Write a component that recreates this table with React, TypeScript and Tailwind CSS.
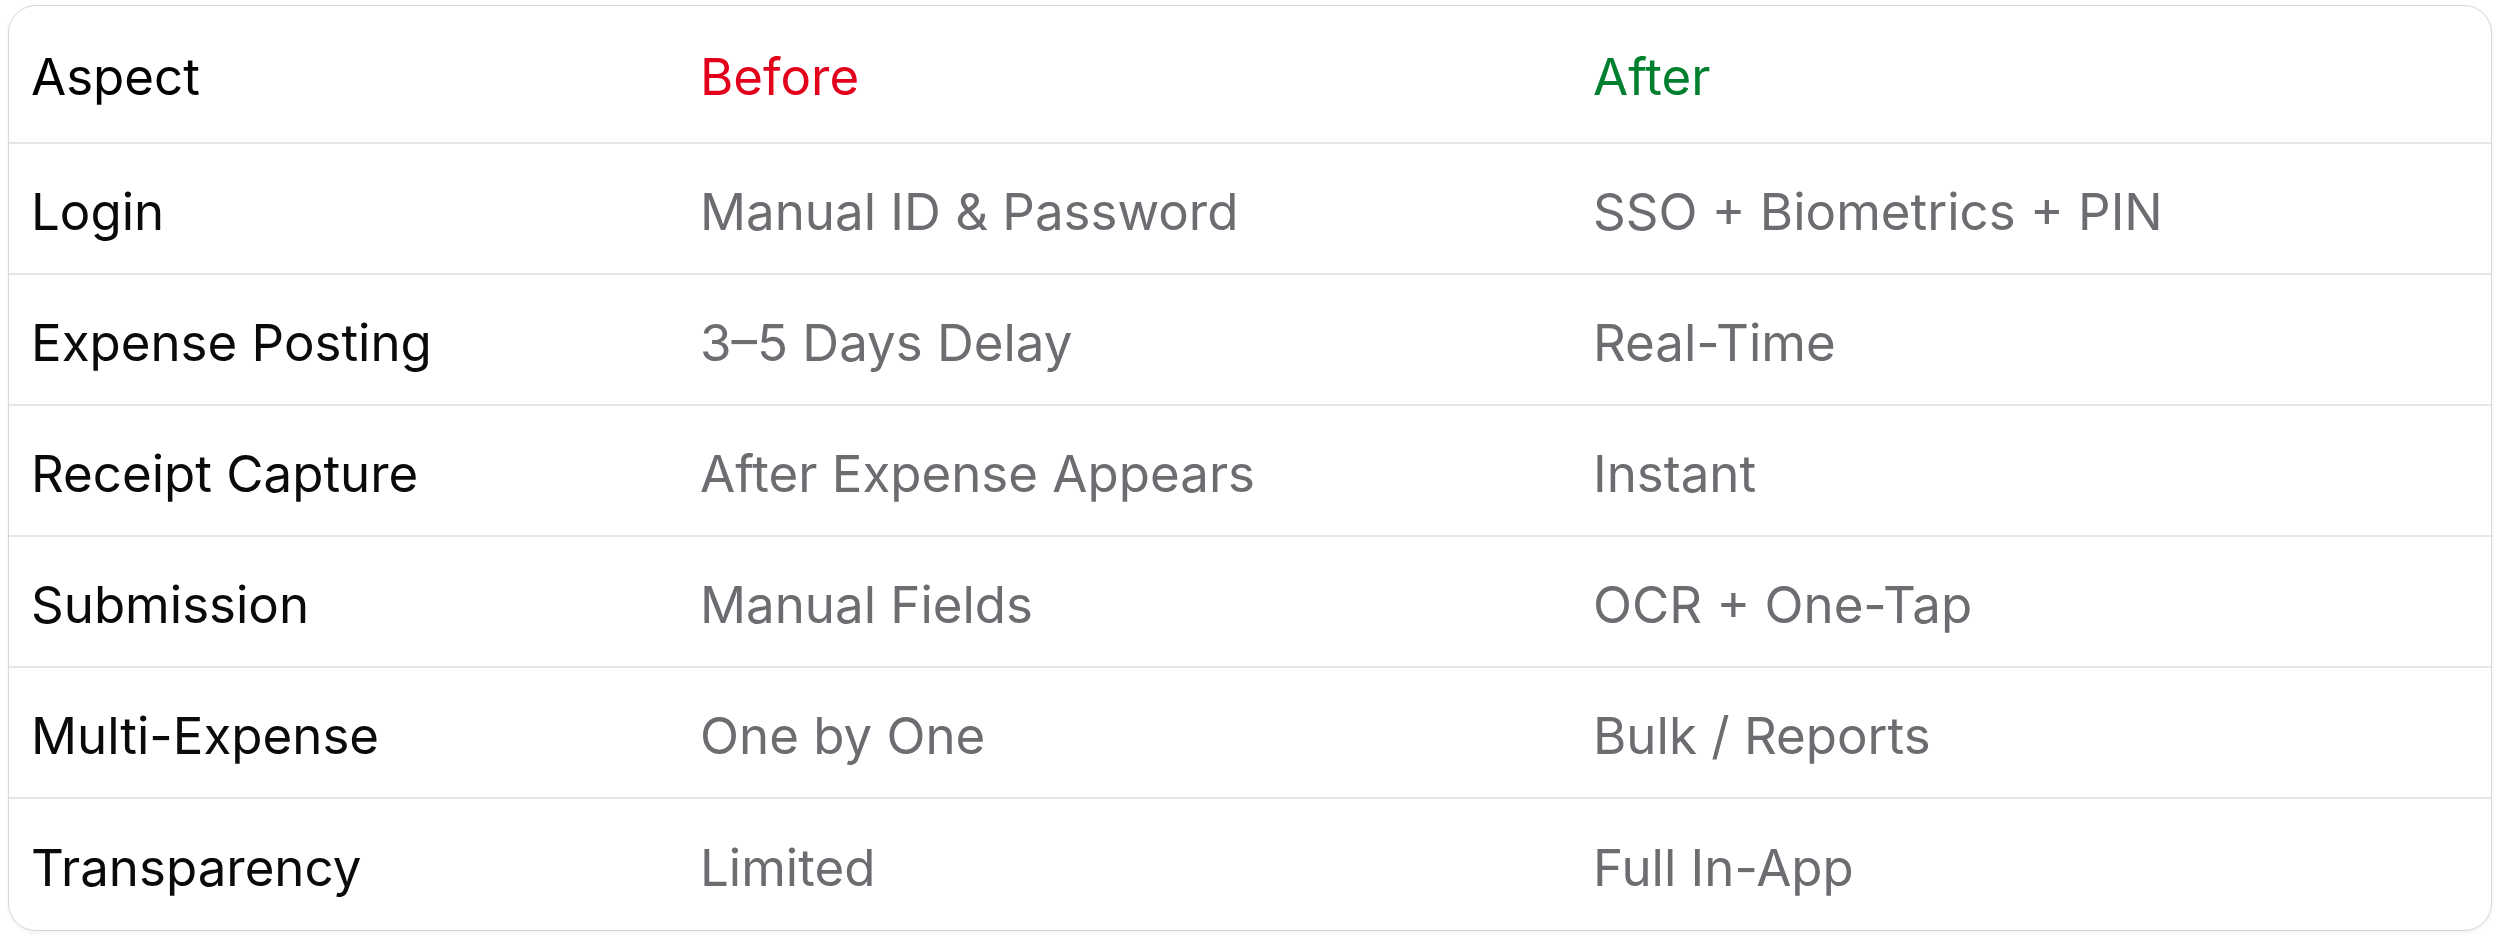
import React from 'react';

const rows = [
  { aspect: 'Login', before: 'Manual ID & Password', after: 'SSO + Biometrics + PIN' },
  { aspect: 'Expense Posting', before: '3–5 Days Delay', after: 'Real-Time' },
  { aspect: 'Receipt Capture', before: 'After Expense Appears', after: 'Instant' },
  { aspect: 'Submission', before: 'Manual Fields', after: 'OCR + One-Tap' },
  { aspect: 'Multi-Expense', before: 'One by One', after: 'Bulk / Reports' },
  { aspect: 'Transparency', before: 'Limited', after: 'Full In-App' },
];

export default function App() {
  return (
    <div className="min-h-screen bg-white px-[8px] pt-[5px] font-['Inter','Liberation_Sans',sans-serif]">
      <div className="overflow-hidden rounded-[28px] border border-[#d6d6dc] bg-white shadow-[0_2px_4px_rgba(0,0,0,0.06)]">
        <div className="grid h-[138px] grid-cols-[668px_893px_1fr] items-center border-b-2 border-[#e6e6e9] pt-[6px] text-[51px]">
          <div className="pl-[22px] text-black">Aspect</div>
          <div className="pl-[23px] text-[#e3001b]">Before</div>
          <div className="pl-[23px] text-[#00802f]">After</div>
        </div>
        {rows.map((r, i) => (
          <div
            key={r.aspect}
            className={`grid h-[131px] grid-cols-[668px_893px_1fr] items-center pt-[7px] text-[51px] ${
              i < rows.length - 1 ? 'border-b-2 border-[#e6e6e9]' : ''
            }`}
          >
            <div className="pl-[22px] text-[#0a0a0a]">{r.aspect}</div>
            <div className="pl-[23px] text-[#6c6c71]">{r.before}</div>
            <div className="pl-[23px] text-[#6c6c71]">{r.after}</div>
          </div>
        ))}
      </div>
    </div>
  );
}
